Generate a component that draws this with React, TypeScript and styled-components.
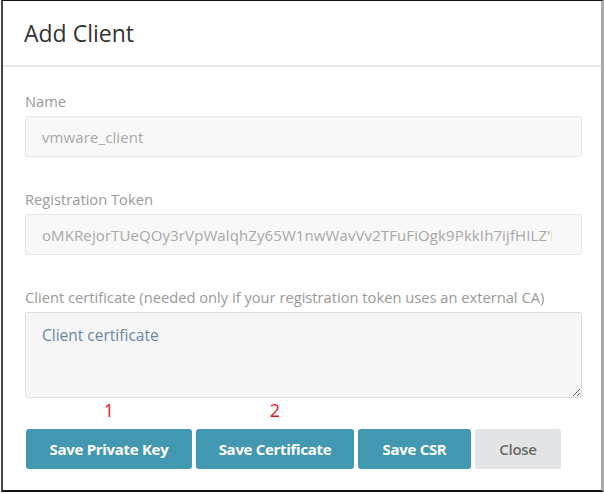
import React from 'react'
import styled, { createGlobalStyle } from 'styled-components'

const GlobalStyle = createGlobalStyle`
    html, body {
        margin: 0;
        padding: 0;
        background: #fff;
    }
    body {
        font-family: "Open Sans", "Noto Sans", "Liberation Sans", sans-serif;
    }
`

const Frame = styled.div`
    box-sizing: border-box;
    width: 603px;
    height: 492px;
    margin-left: 1px;
    border-top: 1px solid #111;
    border-left: 2px solid #444;
    border-right: 3px solid #a9a9a9;
    border-bottom: 2px solid #111;
    background: #fff;
    display: flex;
    flex-direction: column;
`

const Header = styled.div`
    height: 64px;
    display: flex;
    align-items: center;
    padding: 0 21px;
    border-bottom: 2px solid #e8e8e8;
`

const Title = styled.h4`
    margin: 0;
    font-size: 23px;
    font-weight: 400;
    color: #333;
`

const Body = styled.div`
    padding: 24px 19px 0 22px;
    display: flex;
    flex-direction: column;
    gap: 32px;
`

const Field = styled.div`
    display: flex;
    flex-direction: column;
    gap: 5px;
`

const Label = styled.label`
    font-size: 14.7px;
    line-height: 20px;
    color: #9a9a9a;
`

const TextInput = styled.input`
    box-sizing: border-box;
    width: 100%;
    height: 41px;
    padding: 0 29px 0 16px;
    border: 1px solid #e6e6e6;
    border-radius: 3px;
    background: #f8f8f8;
    font-family: inherit;
    font-size: 15px;
    letter-spacing: 0.1px;
    color: #a8a8a8;
    outline: none;
`

const TextArea = styled.textarea`
    box-sizing: border-box;
    width: 100%;
    height: 86px;
    padding: 11px 16px;
    border: 1px solid #dedede;
    border-radius: 3px;
    background: #f6f6f6;
    font-family: inherit;
    font-size: 15.5px;
    color: #555;
    outline: none;

    &::placeholder {
        color: #6a86a4;
        opacity: 1;
    }
`

const Footer = styled.div`
    display: flex;
    gap: 4px;
    padding: 2px 0 0 23px;
`

const Action = styled.div`
    display: flex;
    flex-direction: column;
    align-items: center;
    gap: 9px;
`

const Marker = styled.span`
    height: 20px;
    line-height: 20px;
    font-size: 18px;
    color: #e8141b;
`

const Button = styled.button<{ $secondary?: boolean; $width: number }>`
    width: ${({ $width }) => $width}px;
    height: 40px;
    border: none;
    border-radius: 3px;
    font-family: inherit;
    font-size: 15px;
    letter-spacing: -0.3px;
    cursor: pointer;
    background: ${({ $secondary }) => ($secondary ? '#e3e4e6' : '#4398b1')};
    color: ${({ $secondary }) => ($secondary ? '#6a6a6a' : '#fff')};
    font-weight: ${({ $secondary }) => ($secondary ? 600 : 700)};
`

const actions = [
    { label: 'Save Private Key', width: 166, marker: '1' },
    { label: 'Save Certificate', width: 158, marker: '2' },
    { label: 'Save CSR', width: 113, marker: '' },
    { label: 'Close', width: 86, marker: '', secondary: true }
]

export default function App() {
    return (
        <>
            <GlobalStyle />
            <Frame>
                <Header>
                    <Title>Add Client</Title>
                </Header>
                <Body>
                    <Field>
                        <Label>Name</Label>
                        <TextInput readOnly value="vmware_client" />
                    </Field>
                    <Field>
                        <Label>Registration Token</Label>
                        <TextInput readOnly value="oMKRejorTUeQOy3rVpWalqhZy65W1nwWavVv2TFuFiOgk9PkkIh7ijfHILZ'bQx" />
                    </Field>
                    <Field>
                        <Label>Client certificate (needed only if your registration token uses an external CA)</Label>
                        <TextArea placeholder="Client certificate" />
                    </Field>
                </Body>
                <Footer>
                    {actions.map(a => (
                        <Action key={a.label}>
                            <Marker>{a.marker}</Marker>
                            <Button $width={a.width} $secondary={a.secondary}>
                                {a.label}
                            </Button>
                        </Action>
                    ))}
                </Footer>
            </Frame>
        </>
    )
}
